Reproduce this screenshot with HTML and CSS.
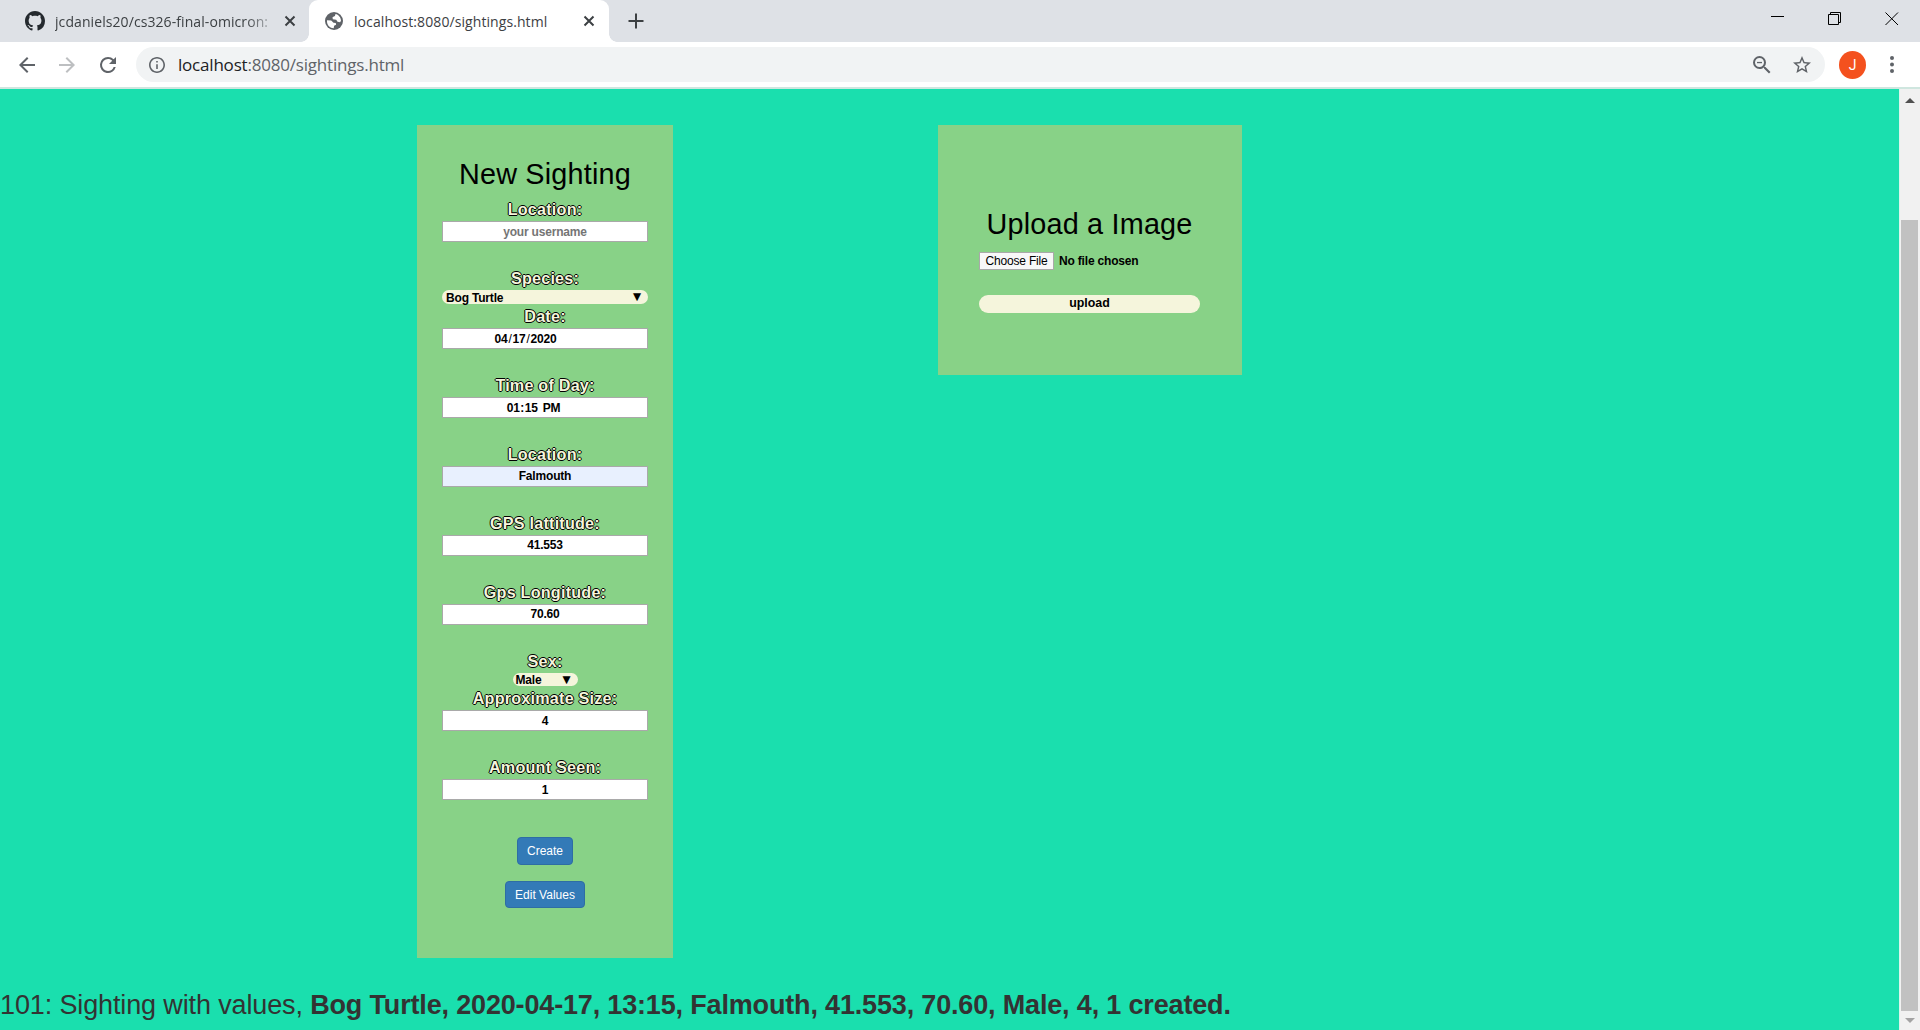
FILE: index.html
```html
<!DOCTYPE html>
<html lang="en">
<head>
<meta charset="utf-8">
<title>Sightings</title>
<link rel="stylesheet" href="styles.css">
</head>
<body>
<div class="tabs">
  <div class="tab tab-idle">
    <svg class="favicon" width="20" height="20" viewBox="0 0 16 16"><path fill="#24292e" d="M8 0C3.58 0 0 3.58 0 8c0 3.54 2.29 6.53 5.47 7.59.4.07.55-.17.55-.38 0-.19-.01-.82-.01-1.49-2.01.37-2.53-.49-2.69-.94-.09-.23-.48-.94-.82-1.13-.28-.15-.68-.52-.01-.53.63-.01 1.08.58 1.23.82.72 1.21 1.87.87 2.33.66.07-.52.28-.87.51-1.07-1.78-.2-3.64-.89-3.64-3.95 0-.87.31-1.59.82-2.15-.08-.2-.36-1.02.08-2.12 0 0 .67-.21 2.2.82.64-.18 1.32-.27 2-.27s1.36.09 2 .27c1.53-1.04 2.2-.82 2.2-.82.44 1.1.16 1.92.08 2.12.51.56.82 1.27.82 2.15 0 3.07-1.87 3.75-3.65 3.95.29.25.54.73.54 1.48 0 1.07-.01 1.93-.01 2.2 0 .21.15.46.55.38A8.01 8.01 0 0 0 16 8c0-4.42-3.58-8-8-8z"/></svg>
    <span class="tab-title fade">jcdaniels20/cs326-final-omicron:</span>
    <svg class="close" width="12" height="12" viewBox="0 0 12 12"><path d="M1.5 1.5l9 9M10.500 1.500l-9 9" stroke="#3c4043" stroke-width="2"/></svg>
  </div>
  <div class="tab tab-active">
    <svg class="favicon" width="18" height="18" viewBox="0 0 18 18"><circle cx="9" cy="9" r="9" fill="#5f6368"/><path fill="#fff" d="M2 8.200l4.200.3 2.300 2.300 2.300.1.300 1.900-2 .9-.4 2.500C5 16 2 13 2 9.400zM10.500 2l-.6 2-2.400 1.200.3 2 3.400.6 1.300 2 2.600.4.900-1.400C16 5.500 13.500 2.600 10.500 2z"/></svg>
    <span class="tab-title">localhost:8080/sightings.html</span>
    <svg class="close" width="12" height="12" viewBox="0 0 12 12"><path d="M1.500 1.500l9 9M10.500 1.500l-9 9" stroke="#3c4043" stroke-width="2"/></svg>
  </div>
  <svg class="plus" width="16" height="16" viewBox="0 0 16 16"><path d="M8 .5v15M.5 8h15" stroke="#3c4043" stroke-width="2"/></svg>
  <div class="window-buttons">
    <svg width="14" height="14" viewBox="0 0 14 14"><path d="M0 4.500h13" stroke="#000"/></svg>
    <svg width="14" height="14" viewBox="0 0 14 14"><path d="M.5 2.500h10v10H.5zM2.500 2.500v-2h10v10h-2" fill="none" stroke="#000"/></svg>
    <svg width="14" height="14" viewBox="0 0 14 14"><path d="M.5.500l12.500 12.500M13 .5L.5 13" stroke="#000"/></svg>
  </div>
</div>
<div class="toolbar">
  <div class="nav">
    <svg width="20" height="20" viewBox="2 2 20 20"><path fill="#5f6368" d="M20 11H7.830l5.590-5.590L12 4l-8 8 8 8 1.410-1.410L7.830 13H20v-2z"/></svg>
    <svg width="20" height="20" viewBox="2 2 20 20"><path fill="#bdbfc1" d="M12 4l-1.410 1.410L16.170 11H4v2h12.170l-5.580 5.590L12 20l8-8z"/></svg>
    <svg width="22" height="22" viewBox="1 1 22 22"><path fill="#5f6368" d="M17.650 6.350A7.958 7.958 0 0 0 12 4a8 8 0 1 0 7.730 10h-2.080A5.990 5.990 0 0 1 12 18a6 6 0 1 1 0-12c1.660 0 3.140.69 4.220 1.780L13 11h7V4l-2.350 2.350z"/></svg>
  </div>
  <div class="omnibox">
    <svg width="16" height="16" viewBox="2 2 20 20"><path fill="#5f6368" d="M11 7h2v2h-2zm0 4h2v6h-2zm1-9C6.480 2 2 6.480 2 12s4.480 10 10 10 10-4.480 10-10S17.520 2 12 2zm0 18c-4.410 0-8-3.590-8-8s3.590-8 8-8 8 3.590 8 8-3.590 8-8 8z"/></svg>
    <span class="url"><b>localhost</b>:8080/sightings.html</span>
    <svg class="zoom" width="18" height="18" viewBox="3 3 18 18"><path fill="#5f6368" d="M15.500 14h-.79l-.28-.27A6.471 6.471 0 0 0 16 9.500 6.500 6.500 0 1 0 9.500 16c1.610 0 3.090-.59 4.230-1.570l.27.28v.79l5 4.990L20.490 19l-4.990-5zm-6 0C7.010 14 5 11.990 5 9.500S7.010 5 9.500 5 14 7.010 14 9.500 11.990 14 9.500 14z"/><path fill="#5f6368" d="M7 8.900h5v1.300H7z"/></svg>
    <svg width="18" height="18" viewBox="2 2 20 20"><path fill="#5f6368" d="M22 9.240l-7.190-.62L12 2 9.190 8.630 2 9.240l5.460 4.730L5.820 21 12 17.270 18.180 21l-1.630-7.030L22 9.240zM12 15.400l-3.760 2.270 1-4.280-3.320-2.880 4.380-.38L12 6.100l1.710 4.040 4.380.38-3.320 2.880 1 4.280L12 15.400z"/></svg>
  </div>
  <span class="avatar">J</span>
  <svg width="4" height="17" viewBox="0 0 4 17"><g fill="#5f6368"><circle cx="2" cy="2" r="2"/><circle cx="2" cy="8.500" r="2"/><circle cx="2" cy="15" r="2"/></g></svg>
</div>
<div class="viewport">
  <main class="page">
    <div class="columns">
      <form class="card sighting">
        <h2>New Sighting</h2>
        <div class="field"><label>Location:</label><div class="input hint">your username</div></div>
        <div class="field"><label>Species:</label><div class="select">Bog Turtle<i>▼</i></div></div>
        <div class="field"><label>Date:</label><div class="input date">04<s>/</s>17<s>/</s>2020</div></div>
        <div class="field"><label>Time of Day:</label><div class="input time">01<s><b>:</b></s>15<s></s>PM</div></div>
        <div class="field"><label>Location:</label><div class="input raised filled">Falmouth</div></div>
        <div class="field"><label>GPS lattitude:</label><div class="input raised">41.553</div></div>
        <div class="field"><label>Gps Longitude:</label><div class="input raised">70.60</div></div>
        <div class="field"><label>Sex:</label><div class="select small">Male<i>▼</i></div></div>
        <div class="field"><label>Approximate Size:</label><div class="input">4</div></div>
        <div class="field"><label>Amount Seen:</label><div class="input">1</div></div>
        <button type="button" class="btn create">Create</button>
        <button type="button" class="btn edit">Edit Values</button>
      </form>
      <form class="card upload">
        <h2>Upload a Image</h2>
        <div class="file"><span class="choose">Choose File</span><span>No file chosen</span></div>
        <button type="button" class="send">upload</button>
      </form>
    </div>
    <p class="result"><span class="lead">101: Sighting with values, </span><strong>Bog Turtle, 2020-04-17, 13:15, Falmouth, 41.553, 70.60, Male, 4, 1 created.</strong></p>
  </main>
  <div class="scrollbar">
    <svg width="10" height="5" viewBox="0 0 10 5"><path d="M0 5l5-5 5 5z" fill="#505050"/></svg>
    <div class="thumb"></div>
    <svg width="10" height="5" viewBox="0 0 10 5"><path d="M0 0l5 5 5-5z" fill="#a3a3a3"/></svg>
  </div>
</div>
</body>
</html>
```
FILE: styles.css
```css
* { box-sizing: border-box; }
body {
  margin: 0;
  height: 1030px;
  display: flex;
  flex-direction: column;
  overflow: hidden;
  font-family: "Liberation Sans", Arial, sans-serif;
  background: #fff;
}
svg { display: block; flex: none; }

/* Browser tabs */
.tabs {
  height: 42px;
  display: flex;
  align-items: center;
  background: #dee1e6;
  font-family: "Open Sans", "Noto Sans", sans-serif;
  font-size: 14px;
  color: #3c4043;
}
.tab { display: flex; align-items: center; height: 42px; }
.tab-idle { width: 309px; padding: 0 13px 0 25px; }
.tab-active {
  position: relative;
  width: 300px;
  padding: 0 15px 0 16px;
  background: #fff;
  border-radius: 9px 9px 0 0;
}
.tab-active::before,
.tab-active::after {
  content: "";
  position: absolute;
  bottom: 0;
  width: 8px;
  height: 8px;
}
.tab-active::before { left: -8px; background: radial-gradient(circle at 0 0, transparent 7.5px, #fff 8px); }
.tab-active::after { right: -8px; background: radial-gradient(circle at 100% 0, transparent 7.5px, #fff 8px); }
.tab-title { flex: 1; margin-left: 10px; white-space: nowrap; overflow: hidden; letter-spacing: 0.08px; }
.tab-active .tab-title { margin-left: 11px; }
.tab-active .close { margin-right: -1px; }
.fade { -webkit-mask-image: linear-gradient(90deg, #000 190px, transparent 225px); mask-image: linear-gradient(90deg, #000 190px, transparent 225px); }
.plus { margin-left: 19px; }
.window-buttons { margin-left: auto; display: flex; gap: 43px; padding: 0 21px 5px 0; }

/* Address row */
.toolbar {
  height: 47px;
  padding: 0 26px 0 17px;
  display: flex;
  align-items: center;
  border-bottom: 2px solid #cfe6df;
}
.nav { display: flex; align-items: center; gap: 20px; width: 119px; }
.omnibox {
  flex: 1;
  height: 35px;
  display: flex;
  align-items: center;
  padding: 0 14px 0 13px;
  background: #f1f3f4;
  border-radius: 18px;
}
.url {
  margin-left: 13px;
  font: 17px "Open Sans", "Noto Sans", sans-serif;
  color: #5f6368;
  letter-spacing: -0.2px;
}
.url b { font-weight: 400; color: #202124; }
.zoom { margin-left: auto; margin-right: 22px; }
.avatar {
  width: 27px;
  height: 28px;
  margin: 0 24px 0 14px;
  border-radius: 50%;
  background: #f4511e;
  color: #fff;
  font: 14px/28px Roboto, sans-serif;
  text-align: center;
}

/* Page */
.viewport { flex: 1; display: flex; min-height: 0; }
.page { flex: 1; background: #1adfae; }
.columns { display: flex; align-items: flex-start; gap: 265px; padding: 36px 0 0 417px; }
.card {
  display: flex;
  flex-direction: column;
  align-items: center;
  background: #88d287;
}
.sighting { width: 256px; height: 833px; padding: 33px 25px 0; }
.upload { width: 304px; height: 250px; padding: 83px 42px 0 41px; }
h2 {
  margin: 0;
  height: 39px;
  font-size: 28.8px;
  line-height: 33px;
  font-weight: 400;
  letter-spacing: 0.2px;
  color: #000;
  white-space: nowrap;
}
.sighting h2 { width: 206px; text-align: center; }
.field { width: 206px; display: flex; flex-direction: column; align-items: center; }
label {
  height: 24px;
  line-height: 24px;
  font-size: 16.2px;
  font-weight: 700;
  letter-spacing: 0.2px;
  color: beige;
  white-space: nowrap;
  text-shadow: -1px 0 #000, 0 1px #000, 1px 0 #000, 0 -1px #000;
}
.input {
  width: 206px;
  height: 21px;
  margin-bottom: 24px;
  border: 1px solid #a9a9a9;
  background: #fff;
  color: #000;
  font-size: 12px;
  line-height: 20px;
  letter-spacing: -0.18px;
  font-weight: 700;
  text-align: center;
}
.input.raised { line-height: 18px; }
.input s { display: inline-block; width: 5px; text-decoration: none; font-weight: 400; text-align: center; }
.hint { color: #757575; }
.filled { background: #e8f0fe; }
.date { padding-right: 39px; }
.time { padding-right: 23px; }
.select {
  display: flex;
  justify-content: space-between;
  width: 206px;
  height: 14px;
  padding: 0 7px 0 4px;
  border-radius: 8px;
  background: beige;
  color: #000;
  font-size: 12px;
  line-height: 16px;
  letter-spacing: -0.18px;
  font-weight: 700;
}
.select.small { width: 65px; height: 13px; padding-left: 3px; line-height: 15px; }
.select i { font: 10.5px/13px "DejaVu Sans", sans-serif; }
.btn {
  padding: 0;
  border: 1px solid #2e6da4;
  border-radius: 4px;
  background: #337ab7;
  color: #fff;
  font: 12px "Liberation Sans", Arial, sans-serif;
}
.create { width: 56px; height: 28px; margin-top: 13px; }
.edit { width: 80px; height: 27px; margin-top: 16px; }
.file {
  width: 221px;
  height: 18px;
  margin-top: 5px;
  display: flex;
  gap: 5px;
  font-size: 12px;
  line-height: 18px;
  letter-spacing: -0.18px;
  font-weight: 700;
}
.choose {
  width: 75px;
  border: 1px solid #a9a9a9;
  background: #f8f8f8;
  font-weight: 400;
  line-height: 16px;
  text-align: center;
  white-space: nowrap;
}
.send {
  width: 221px;
  height: 18px;
  margin-top: 25px;
  padding: 0 0 2px;
  border: 0;
  border-radius: 9px;
  background: beige;
  color: #000;
  font: 700 12.4px/16px "Liberation Sans", Arial, sans-serif;
}
.result {
  margin: 31px 0 0;
  font-size: 27px;
  line-height: 32px;
  letter-spacing: -0.165px;
  color: #333;
  white-space: nowrap;
}
.lead { letter-spacing: -0.13px; }
.scrollbar {
  width: 21px;
  display: flex;
  flex-direction: column;
  align-items: center;
  padding: 9px 1px 7px 0;
  border-left: 1px solid #d8f5ec;
  background: #f1f1f1;
}
.thumb { width: 17px; height: 791px; margin: 117px 0 7px; background: #c1c1c1; }
```
